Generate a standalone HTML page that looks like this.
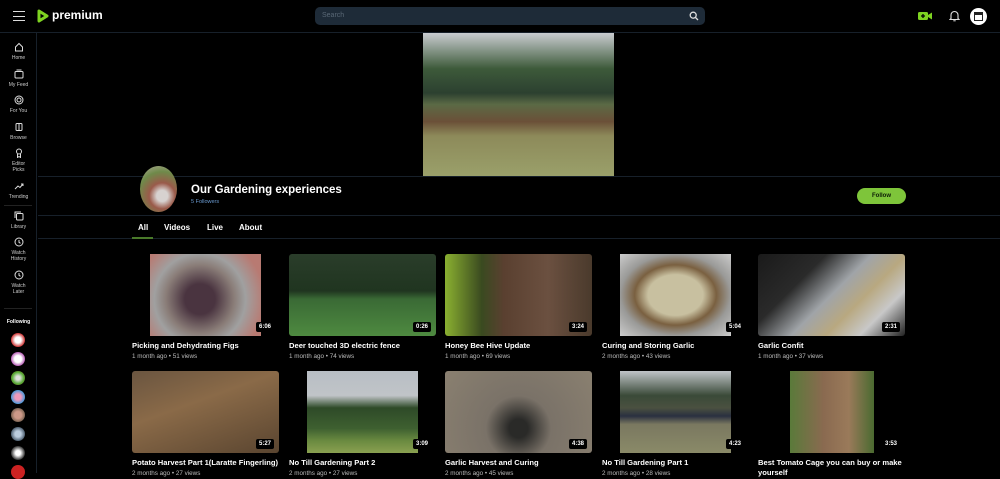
<!DOCTYPE html>
<html><head><meta charset="utf-8"><style>
*{box-sizing:border-box;margin:0;padding:0}
body{width:1000px;height:472px;background:#000;color:#fff;font-family:"Liberation Sans",sans-serif;position:relative;overflow:hidden}
.abs{position:absolute}
.line{position:absolute;height:1px;background:#17202a}
.side{position:absolute;left:0;top:33px;width:37px;height:440px;border-right:1px solid #17202a}
.si{position:absolute;left:0;width:37px;text-align:center;font-size:5px;color:#ccc;line-height:6px}
.si svg{display:block;margin:0 auto 3px}
.av{position:absolute;left:11px;width:14px;height:14px;border-radius:50%}
.thumb{position:absolute;width:147px;height:82px;border-radius:3px;overflow:hidden;background:#000}
.thumb i{position:absolute;top:0;bottom:0}
.dur{position:absolute;right:5px;bottom:4px;background:#000;color:#fff;font-size:6px;font-weight:bold;padding:2px 3px;border-radius:2px}
.t{position:absolute;font-size:7.6px;font-weight:bold;color:#fff;white-space:nowrap}
.m{position:absolute;font-size:6.3px;color:#bbb;white-space:nowrap}
</style></head><body>
<div class="abs" style="left:13px;top:11px;width:12px;height:10px;border-top:1.5px solid #ddd;border-bottom:1.5px solid #ddd"></div>
<div class="abs" style="left:13px;top:15.5px;width:12px;height:1.5px;background:#ddd"></div>
<svg class="abs" style="left:37px;top:9px" width="12" height="14" viewBox="0 0 12 14"><path d="M2 2 L10 7 L2 12 Z" fill="none" stroke="#7ed321" stroke-width="3" stroke-linejoin="round"/></svg>
<div class="abs" style="left:52px;top:8px;font-size:12px;font-weight:bold;color:#fff">premium</div>
<div class="abs" style="left:315px;top:7px;width:390px;height:18px;border-radius:5px;background:#1e2b38"></div>
<div class="abs" style="left:322px;top:12px;font-size:7px;color:#5a6876">Search</div>
<svg class="abs" style="left:689px;top:11px" width="10" height="10" viewBox="0 0 10 10"><circle cx="4.2" cy="4.2" r="3" fill="none" stroke="#ddd" stroke-width="1.3"/><path d="M6.5 6.5 L9 9" stroke="#ddd" stroke-width="1.3"/></svg>
<svg class="abs" style="left:918px;top:11px" width="14" height="10" viewBox="0 0 14 10"><rect x="0" y="1" width="10" height="8" rx="1.5" fill="#7ed321"/><path d="M10 4 L14 1.5 V8.5 L10 6Z" fill="#7ed321"/><path d="M5 3v4M3 5h4" stroke="#000" stroke-width="1.3"/></svg>
<svg class="abs" style="left:949px;top:10px" width="11" height="12" viewBox="0 0 11 12"><path d="M2 8.5 V5 a3.5 3.5 0 0 1 7 0 V8.5 L10 9.5 H1 Z" fill="none" stroke="#ddd" stroke-width="1.1"/><path d="M4.3 10.8h2.4" stroke="#ddd" stroke-width="1"/></svg>
<div class="abs" style="left:970px;top:8px;width:17px;height:17px;border-radius:50%;background:#fff"></div>
<div class="abs" style="left:974px;top:12px;width:9px;height:9px;border:1.5px solid #222;border-top-width:3px"></div>
<div class="line" style="left:0;top:32px;width:1000px"></div>
<div class="side"></div>
<div class="si" style="top:42px"><svg width="10" height="10" viewBox="0 0 10 10"><path d="M1.5 5 L5 1.5 L8.5 5 V9 H1.5Z" fill="none" stroke="#ddd"/></svg>Home</div>
<div class="si" style="top:69px"><svg width="10" height="10" viewBox="0 0 10 10"><rect x="1" y="2.5" width="8" height="6.5" rx="1" fill="none" stroke="#ddd"/><path d="M2.5 1h5" stroke="#ddd"/></svg>My Feed</div>
<div class="si" style="top:95px"><svg width="10" height="10" viewBox="0 0 10 10"><circle cx="5" cy="5" r="4" fill="none" stroke="#ddd"/><circle cx="5" cy="5" r="2" fill="none" stroke="#ddd"/></svg>For You</div>
<div class="si" style="top:122px"><svg width="10" height="10" viewBox="0 0 10 10"><rect x="2" y="1.5" width="6" height="7" rx="1" fill="none" stroke="#ddd"/><path d="M5 1.5v7" stroke="#ddd"/></svg>Browse</div>
<div class="si" style="top:148px"><svg width="10" height="10" viewBox="0 0 10 10"><circle cx="5" cy="3.5" r="2.5" fill="none" stroke="#ddd"/><path d="M3.5 6v3.5l1.5-1 1.5 1V6" fill="none" stroke="#ddd"/></svg>Editor<br>Picks</div>
<div class="si" style="top:181px"><svg width="10" height="10" viewBox="0 0 10 10"><path d="M1 8 L4 5 L6 6.5 L9 3 M7 3h2v2" fill="none" stroke="#ddd"/></svg>Trending</div>
<div class="abs" style="left:4px;top:205px;width:28px;height:1px;background:#222"></div>
<div class="si" style="top:211px"><svg width="10" height="10" viewBox="0 0 10 10"><rect x="2.5" y="2.5" width="6.5" height="6.5" rx="1" fill="none" stroke="#ddd"/><path d="M1 7V1h6" fill="none" stroke="#ddd"/></svg>Library</div>
<div class="si" style="top:237px"><svg width="10" height="10" viewBox="0 0 10 10"><circle cx="5" cy="5" r="4" fill="none" stroke="#ddd"/><path d="M5 3v2.3l1.5 1" fill="none" stroke="#ddd"/></svg>Watch<br>History</div>
<div class="si" style="top:270px"><svg width="10" height="10" viewBox="0 0 10 10"><circle cx="5" cy="5" r="4" fill="none" stroke="#ddd"/><path d="M5 3v2.3l1.5 1" fill="none" stroke="#ddd"/></svg>Watch<br>Later</div>
<div class="abs" style="left:4px;top:308px;width:28px;height:1px;background:#222"></div>
<div class="si" style="top:319px;font-weight:bold;color:#fff">Following</div>
<div class="av" style="top:333px;background:radial-gradient(#fff 30%,#c33 70%)"></div>
<div class="av" style="top:352px;background:radial-gradient(#fff 35%,#a4a 75%)"></div>
<div class="av" style="top:371px;background:radial-gradient(#ddd 20%,#5a3 60%,#832)"></div>
<div class="av" style="top:390px;background:radial-gradient(#e9b 30%,#39d 75%)"></div>
<div class="av" style="top:408px;background:radial-gradient(#c98 35%,#654 80%)"></div>
<div class="av" style="top:427px;background:radial-gradient(#bcd 30%,#345 80%)"></div>
<div class="av" style="top:446px;background:radial-gradient(#fff 25%,#333 70%)"></div>
<div class="av" style="top:465px;background:#c22"></div>
<div class="abs" style="left:423px;top:33px;width:191px;height:143px;background:linear-gradient(180deg,#c9ccd0 0%,#3d5a3a 25%,#2c4030 42%,#5b6a45 50%,#6b5038 62%,#8d8a5a 72%,#9aa06a 100%)"></div>
<div class="line" style="left:38px;top:176px;width:962px"></div>
<div class="abs" style="left:140px;top:166px;width:37px;height:46px;border-radius:50%;background:radial-gradient(circle at 60% 65%,#d7d2d0 15%,#9a5a4a 35%,#6f8a4a 65%,#b8b0a0)"></div>
<div class="abs" style="left:191px;top:184px;font-size:11.5px;font-weight:bold">Our Gardening experiences</div>
<div class="abs" style="left:191px;top:199px;font-size:5.5px;color:#6a9ad0">5 Followers</div>
<div class="abs" style="left:857px;top:188px;width:49px;height:16px;border-radius:8px;background:#7ec53a;color:#0b1a05;font-size:6px;font-weight:bold;text-align:center;line-height:16px">Follow</div>
<div class="line" style="left:38px;top:215px;width:962px"></div>
<div class="abs" style="left:138px;top:223px;font-size:8px;font-weight:bold">All</div>
<div class="abs" style="left:164px;top:223px;font-size:8px;font-weight:bold">Videos</div>
<div class="abs" style="left:207px;top:223px;font-size:8px;font-weight:bold">Live</div>
<div class="abs" style="left:239px;top:223px;font-size:8px;font-weight:bold">About</div>
<div class="line" style="left:38px;top:238px;width:962px"></div>
<div class="abs" style="left:132px;top:237px;width:21px;height:2px;background:#4a7a2a"></div>
<div class="thumb" style="left:132px;top:254px"><i style="left:18px;width:111px;background:radial-gradient(circle at 45% 55%,#4a3440 20%,#8a7d78 45%,#a0a0a0 60%,#b87a72 85%)"></i><span class="dur">6:06</span></div>
<div class="thumb" style="left:289px;top:254px"><i style="left:0;width:147px;background:linear-gradient(180deg,#2a3d2a 0%,#203520 45%,#3a6a35 55%,#4e8a40 100%)"></i><span class="dur">0:26</span></div>
<div class="thumb" style="left:445px;top:254px"><i style="left:0;width:147px;background:linear-gradient(90deg,#8ab030 0%,#3a4a20 25%,#5a4030 40%,#6b5040 70%,#4a3a2c 100%)"></i><span class="dur">3:24</span></div>
<div class="thumb" style="left:602px;top:254px"><i style="left:18px;width:111px;background:radial-gradient(ellipse at 50% 50%,#c8c0a0 35%,#7a6040 52%,#9a9a98 70%,#ccc 100%)"></i><span class="dur">5:04</span></div>
<div class="thumb" style="left:758px;top:254px"><i style="left:0;width:147px;background:linear-gradient(135deg,#1a1a1a 0%,#2a2a2a 30%,#a0a4a8 50%,#b8a880 65%,#c8c8c8 80%,#222 100%)"></i><span class="dur">2:31</span></div>
<div class="t" style="left:132px;top:341px">Picking and Dehydrating Figs</div><div class="m" style="left:132px;top:353px">1 month ago • 51 views</div>
<div class="t" style="left:289px;top:341px">Deer touched 3D electric fence</div><div class="m" style="left:289px;top:353px">1 month ago • 74 views</div>
<div class="t" style="left:445px;top:341px">Honey Bee Hive Update</div><div class="m" style="left:445px;top:353px">1 month ago • 69 views</div>
<div class="t" style="left:602px;top:341px">Curing and Storing Garlic</div><div class="m" style="left:602px;top:353px">2 months ago • 43 views</div>
<div class="t" style="left:758px;top:341px">Garlic Confit</div><div class="m" style="left:758px;top:353px">1 month ago • 37 views</div>
<div class="thumb" style="left:132px;top:371px"><i style="left:0;width:147px;background:linear-gradient(160deg,#6a5540 0%,#8a6a48 40%,#5a4530 100%)"></i><span class="dur">5:27</span></div>
<div class="thumb" style="left:289px;top:371px"><i style="left:18px;width:111px;background:linear-gradient(180deg,#b8bec4 0%,#c0c4c8 30%,#2e4a28 45%,#3e6030 70%,#6a8a40 85%,#8aa050 100%)"></i><span class="dur">3:09</span></div>
<div class="thumb" style="left:445px;top:371px"><i style="left:0;width:147px;background:radial-gradient(circle at 50% 70%,#2a2a28 10%,#7a7268 35%,#8a8070 100%)"></i><span class="dur">4:38</span></div>
<div class="thumb" style="left:602px;top:371px"><i style="left:18px;width:111px;background:linear-gradient(180deg,#c0c4c8 0%,#3a4a38 30%,#4a5040 45%,#2a3040 55%,#7a7860 65%,#8a8a68 100%)"></i><span class="dur">4:23</span></div>
<div class="thumb" style="left:758px;top:371px"><i style="left:32px;width:84px;background:linear-gradient(90deg,#5a7a3a 0%,#8a6a50 40%,#9a7a5a 70%,#4a6a30 100%)"></i><span class="dur">3:53</span></div>
<div class="t" style="left:132px;top:458px">Potato Harvest Part 1(Laratte Fingerling)</div><div class="m" style="left:132px;top:470px">2 months ago • 27 views</div>
<div class="t" style="left:289px;top:458px">No Till Gardening Part 2</div><div class="m" style="left:289px;top:470px">2 months ago • 27 views</div>
<div class="t" style="left:445px;top:458px">Garlic Harvest and Curing</div><div class="m" style="left:445px;top:470px">2 months ago • 45 views</div>
<div class="t" style="left:602px;top:458px">No Till Gardening Part 1</div><div class="m" style="left:602px;top:470px">2 months ago • 28 views</div>
<div class="t" style="left:758px;top:458px">Best Tomato Cage you can buy or make</div>
<div class="t" style="left:758px;top:468px">yourself</div>
</body></html>
